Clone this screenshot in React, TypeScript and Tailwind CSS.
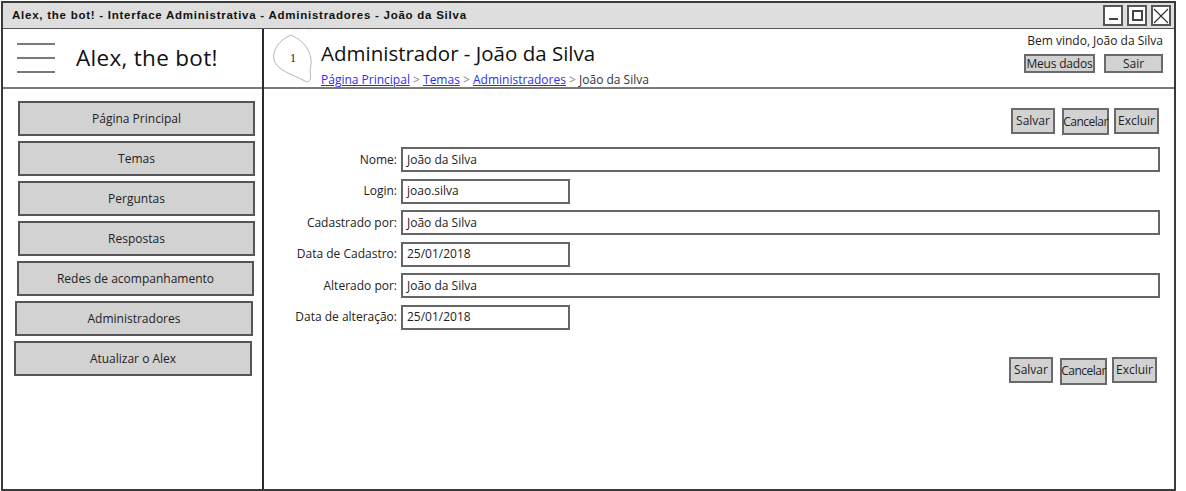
import React from 'react';

const font = "font-['Open_Sans',sans-serif]";

const navItems = [
  { label: 'Página Principal', cls: 'ml-[15px] w-[237px] h-[35px]' },
  { label: 'Temas', cls: 'ml-[15px] w-[237px] h-[35px]' },
  { label: 'Perguntas', cls: 'ml-[15px] w-[237px] h-[35px]' },
  { label: 'Respostas', cls: 'ml-[15px] w-[237px] h-[35px]' },
  { label: 'Redes de acompanhamento', cls: 'ml-[14px] w-[237px] h-[35px]' },
  { label: 'Administradores', cls: 'ml-[12px] w-[238px] h-[35px]' },
  { label: 'Atualizar o Alex', cls: 'ml-[11px] w-[238px] h-[35px]' },
];

const fields = [
  { label: 'Nome:', value: 'João da Silva', wide: true },
  { label: 'Login:', value: 'joao.silva', wide: false },
  { label: 'Cadastrado por:', value: 'João da Silva', wide: true },
  { label: 'Data de Cadastro:', value: '25/01/2018', wide: false },
  { label: 'Alterado por:', value: 'João da Silva', wide: true },
  { label: 'Data de alteração:', value: '25/01/2018', wide: false },
];

function SketchButton({ children, className = '' }: { children: React.ReactNode; className?: string }) {
  return (
    <div
      className={`flex items-center justify-center whitespace-nowrap bg-[#d2d2d2] border-2 border-[#6a6a6a] text-[12px] text-[#222] ${className}`}
    >
      {children}
    </div>
  );
}

function ActionRow() {
  return (
    <div className="flex items-center gap-[5px]">
      <SketchButton className="w-[44px] h-[26px] mr-[2px]">Salvar</SketchButton>
      <SketchButton className="w-[47px] h-[27px] mt-[2px] tracking-[-0.5px]">Cancelar</SketchButton>
      <SketchButton className="w-[45px] h-[26px]">Excluir</SketchButton>
    </div>
  );
}

function Bubble() {
  return (
    <svg width="44" height="52" viewBox="0 0 44 52" className="shrink-0">
      <path
        d="M20 3 C 8 8, 1 18, 3 28 C 6 38, 20 42, 34 49 C 40 52, 40 46, 39 38 C 43 24, 36 10, 20 3 Z"
        fill="white"
        stroke="#b5b5b5"
        strokeWidth="1"
      />
      <text x="19" y="30" fontSize="12" fontFamily="'Liberation Serif', serif" fill="#222">
        1
      </text>
    </svg>
  );
}

export default function App() {
  return (
    <div className={`w-[1186px] h-[491px] bg-white overflow-hidden ${font}`}>
      <div className="ml-[1px] mt-[1px] w-[1175px] h-[490px] border-2 border-[#3a3a3a] flex flex-col">
        {/* title bar */}
        <div className="h-[26px] bg-[#dedede] border-b border-[#555] flex items-center justify-between pl-[9px] pr-[3px]">
          <span className="font-['Liberation_Sans',sans-serif] font-bold text-[11.5px] text-[#111] tracking-[0.75px]">
            Alex, the bot! - Interface Administrativa - Administradores - João da Silva
          </span>
          <div className="flex gap-[4px]">
            <div className="w-[20px] h-[21px] border-2 border-[#555] bg-white flex items-end justify-center pb-[4px]">
              <div className="w-[9px] h-[2px] bg-[#444]" />
            </div>
            <div className="w-[20px] h-[21px] border-2 border-[#555] bg-white flex items-center justify-center">
              <div className="w-[11px] h-[11px] border-2 border-[#444]" />
            </div>
            <div className="w-[20px] h-[21px] border-2 border-[#555] bg-white flex items-center justify-center">
              <svg width="16" height="16" viewBox="0 0 16 16">
                <path d="M1 1 L15 15 M15 1 L1 15" stroke="#333" strokeWidth="1.2" />
              </svg>
            </div>
          </div>
        </div>

        <div className="flex-1 flex min-h-0">
          {/* sidebar */}
          <div className="w-[261px] border-r-2 border-[#2a2a2a] flex flex-col">
            <div className="h-[60px] border-b-2 border-[#7a7a7a] flex items-center">
              <div className="ml-[14px] flex flex-col gap-[12px]">
                <div className="w-[38px] h-[2px] bg-[#7a7a7a]" />
                <div className="w-[38px] h-[2px] bg-[#7a7a7a]" />
                <div className="w-[38px] h-[2px] bg-[#7a7a7a]" />
              </div>
              <span className="ml-[21px] text-[22.5px] text-[#111] leading-none tracking-[0.3px]">Alex, the bot!</span>
            </div>
            <div className="flex flex-col gap-[5px] pt-[12px]">
              {navItems.map((item) => (
                <SketchButton key={item.label} className={`${item.cls} !border-[#555]`}>
                  {item.label}
                </SketchButton>
              ))}
            </div>
          </div>

          {/* main */}
          <div className="flex-1 flex flex-col">
            <div className="h-[60px] border-b-2 border-[#7a7a7a] flex">
              <div className="ml-[7px] mt-[3px]">
                <Bubble />
              </div>
              <div className="ml-[6px] flex flex-col pt-[14px]">
                <span className="text-[20.5px] leading-none text-[#111]">Administrador - João da Silva</span>
                <div className="mt-[10px] text-[12px] leading-none text-[#333] whitespace-nowrap">
                  <span className="text-[#2d2df0] underline">Página Principal</span>
                  <span className="text-[#888]"> &gt; </span>
                  <span className="text-[#2d2df0] underline">Temas</span>
                  <span className="text-[#888]"> &gt; </span>
                  <span className="text-[#2d2df0] underline">Administradores</span>
                  <span className="text-[#888]"> &gt; </span>
                  <span>João da Silva</span>
                </div>
              </div>
              <div className="ml-auto mr-[11px] flex flex-col items-end pt-[6px]">
                <span className="text-[12px] text-[#222] leading-none">Bem vindo, João da Silva</span>
                <div className="mt-[7px] flex gap-[9px]">
                  <SketchButton className="w-[71px] h-[19px] text-[11.5px] tracking-[-0.2px]">Meus dados</SketchButton>
                  <SketchButton className="w-[59px] h-[19px] text-[11.5px]">Sair</SketchButton>
                </div>
              </div>
            </div>

            <div className="flex justify-end pr-[15px] pt-[17px]">
              <ActionRow />
            </div>

            <div className="flex flex-col gap-[6.5px] mt-[12px]">
              {fields.map((f) => (
                <div key={f.label} className="flex items-center">
                  <span className="w-[133px] text-right text-[12px] text-[#222]">{f.label}</span>
                  <div
                    className={`ml-[4px] h-[25px] border-2 border-[#666] bg-white flex items-center px-[4px] text-[12px] text-[#222] ${
                      f.wide ? 'w-[759px]' : 'w-[169px]'
                    }`}
                  >
                    {f.value}
                  </div>
                </div>
              ))}
            </div>

            <div className="flex justify-end pr-[17px] pt-[26px]">
              <ActionRow />
            </div>
          </div>
        </div>
      </div>
    </div>
  );
}
